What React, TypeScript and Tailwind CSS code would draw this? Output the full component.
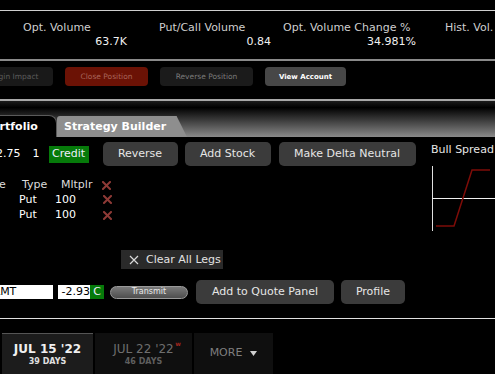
import React from 'react'

const stats = [
  { label: 'Opt. Volume', value: '63.7K', ml: 'ml-[23px]', w: 'w-[104px]' },
  { label: 'Put/Call Volume', value: '0.84', ml: 'ml-[32px]', w: 'w-[112px]' },
  { label: 'Opt. Volume Change %', value: '34.981%', ml: 'ml-[12px]', w: 'w-[133px]' },
  { label: 'Hist. Vol.', value: '', ml: 'ml-[29px]', w: 'w-[80px]' },
]

function RedX() {
  return (
    <svg width="9" height="9" viewBox="0 0 9 9" className="shrink-0">
      <path d="M1 1 L8 8 M8 1 L1 8" stroke="#8e3a36" strokeWidth="2" strokeLinecap="square" />
    </svg>
  )
}

function GrayButton({ label, cls }: { label: string; cls: string }) {
  return (
    <div
      className={`${cls} h-[24px] flex items-center justify-center rounded-[5px] bg-[#3b3b3b] text-[11px] text-[#e6e6e6] shrink-0`}
    >
      {label}
    </div>
  )
}

export default function App() {
  return (
    <div className="w-[495px] h-[374px] bg-black overflow-hidden font-['DejaVu_Sans',sans-serif] text-white leading-[14px]">
      <div className="h-[10px]" />
      <div className="h-px bg-[#cfcfcf]" />

      {/* stats */}
      <div className="h-[48px] flex pt-[10px] whitespace-nowrap">
        {stats.map((s) => (
          <div key={s.label} className={`${s.ml} ${s.w} shrink-0 text-[11px]`}>
            <div className="text-[#cfcfcf]">{s.label}</div>
            <div className="text-right text-[#f0f0f0]">{s.value}</div>
          </div>
        ))}
      </div>
      <div className="h-[2px] bg-[#8a8a8a]" />

      {/* action buttons */}
      <div className="h-[38px] flex pt-[6px] text-[7.5px] whitespace-nowrap">
        <div className="ml-[-30px] w-[83px] h-[19px] rounded-[4px] bg-[#191919] text-[#5c5c5c] flex items-center justify-center shrink-0">
          Margin Impact
        </div>
        <div className="ml-[12px] w-[83px] h-[19px] rounded-[4px] bg-[#6b1205] text-[#a8645a] flex items-center justify-center shrink-0">
          Close Position
        </div>
        <div className="ml-[12px] w-[93px] h-[19px] rounded-[4px] bg-[#1b1b1b] text-[#7a7a7a] flex items-center justify-center shrink-0">
          Reverse Position
        </div>
        <div className="ml-[12px] w-[81px] h-[19px] rounded-[4px] bg-[#474747] text-white text-[7px] font-bold flex items-center justify-center shrink-0">
          View Account
        </div>
      </div>

      {/* tab bar */}
      <div className="h-[2px] bg-[#a8a8a8]" />
      <div className="h-[36px] flex items-end bg-[linear-gradient(to_bottom,#1c1c1c_0%,#000_18%,#8a8a8a_100%)] text-[11px] font-bold whitespace-nowrap">
        <div className="ml-[-30px] w-[87px] h-[22px] bg-black rounded-tr-[8px] border-t border-r border-[#5a5a5a] flex items-center pl-[14px] shrink-0">
          Portfolio
        </div>
        <div className="w-[130px] h-[21px] bg-[#8e8e8e] rounded-tl-[3px] [clip-path:polygon(0_0,92%_0,100%_100%,0_100%)] flex items-center pl-[7px] text-white shrink-0">
          Strategy Builder
        </div>
      </div>

      {/* content */}
      <div className="h-[181px] flex text-[11px] whitespace-nowrap">
        <div className="w-[425px] shrink-0">
          <div className="mt-[5px] h-[24px] flex items-center">
            <span className="ml-[-4px]">2.75</span>
            <span className="ml-[12px]">1</span>
            <span className="ml-[9px] w-[40px] h-[17px] bg-[#067a0a] flex items-center justify-center text-[#eef]">
              Credit
            </span>
            <GrayButton label="Reverse" cls="ml-[14px] w-[75px]" />
            <GrayButton label="Add Stock" cls="ml-[7px] w-[86px]" />
            <GrayButton label="Make Delta Neutral" cls="ml-[8px] w-[137px]" />
          </div>

          <div className="mt-[12px] h-[14px] flex items-center text-[#dcdcdc]">
            <span className="ml-[-1px] w-[7px] overflow-visible">e</span>
            <span className="ml-[16px] w-[27px]">Type</span>
            <span className="ml-[12px] w-[32px]">Mltplr</span>
            <span className="ml-[9px]"><RedX /></span>
          </div>
          {[0, 1].map((i) => (
            <div key={i} className={`${i === 0 ? 'h-[15px]' : 'h-[16px]'} flex items-center`}>
              <span className="ml-[19px] w-[18px]">Put</span>
              <span className="ml-[18px] w-[21px]">100</span>
              <span className="ml-[27px]"><RedX /></span>
            </div>
          ))}

          <div className="mt-[27px] ml-[121px] w-[102px] h-[19px] bg-[#2a2a2a] flex items-center text-[#e2e2e2]">
            <svg width="10" height="10" viewBox="0 0 10 10" className="ml-[8px] shrink-0">
              <path d="M1 1 L9 9 M9 1 L1 9" stroke="#d8d8d8" strokeWidth="1.2" />
            </svg>
            <span className="ml-[7px]">Clear All Legs</span>
          </div>

          <div className="mt-[11px] h-[24px] flex items-center">
            <div className="ml-[-8px] w-[61px] h-[14px] bg-white text-black pl-[2px] flex items-center shrink-0">
              LMT
            </div>
            <div className="ml-[5px] w-[32px] h-[14px] bg-white text-black flex items-center justify-end shrink-0">
              -2.93
            </div>
            <div className="w-[14px] h-[14px] bg-[#067a0a] text-[#eef] flex items-center justify-center shrink-0">
              C
            </div>
            <div className="ml-[6px] w-[78px] h-[13px] rounded-full border border-[#9a9a9a] bg-[linear-gradient(to_bottom,#7a7a7a,#4e4e4e)] text-[8px] text-[#e8e8e8] flex items-center justify-center shrink-0">
              Transmit
            </div>
            <GrayButton label="Add to Quote Panel" cls="ml-[8px] w-[138px]" />
            <GrayButton label="Profile" cls="ml-[7px] w-[64px]" />
          </div>
        </div>

        <div className="flex-1 pt-[6px] pl-[6px]">
          <div className="text-[#e6e6e6]">Bull Spread</div>
          <svg width="64" height="67" viewBox="0 0 64 67" className="mt-[8px]">
            <line x1="1.5" y1="1" x2="1.5" y2="66" stroke="#e0e0e0" strokeWidth="1" />
            <line x1="1" y1="33.5" x2="64" y2="33.5" stroke="#f0f0f0" strokeWidth="1" />
            <polyline points="5,61 23,61 41,5 59,5" fill="none" stroke="#7e0c08" strokeWidth="1.5" />
          </svg>
        </div>
      </div>

      <div className="h-px bg-[#e0e0e0]" />

      {/* expiry tabs */}
      <div className="mt-[14px] flex whitespace-nowrap">
        <div className="ml-[2px] w-[91px] h-[41px] bg-[#1c1c1c] border-t border-[#555] flex flex-col items-center pt-[8px] shrink-0">
          <div className="text-[12px] leading-[14px] font-bold text-[#f0f0f0]">JUL 15 '22</div>
          <div className="text-[8px] leading-[10px] font-bold text-[#e0e0e0] mt-px">39 DAYS</div>
        </div>
        <div className="ml-[2px] w-[97px] h-[41px] bg-[#0f0f0f] flex flex-col items-center pt-[9px] shrink-0">
          <div className="text-[12px] leading-[14px] text-[#6e6e6e] relative">
            JUL 22 '22
            <span className="absolute -right-[7px] -top-[2px] text-[6px] leading-[8px] font-bold text-[#a3261e]">w</span>
          </div>
          <div className="text-[8px] leading-[10px] font-bold text-[#5e5e5e] mt-px">46 DAYS</div>
        </div>
        <div className="ml-[2px] w-[79px] h-[41px] bg-[#0f0f0f] flex items-center justify-center pb-[1px] text-[11px] text-[#7e7e7e] shrink-0">
          MORE
          <svg width="7" height="5" viewBox="0 0 7 5" className="ml-[8px]">
            <path d="M0 0 L7 0 L3.5 5 Z" fill="#d0d0d0" />
          </svg>
        </div>
      </div>
    </div>
  )
}
